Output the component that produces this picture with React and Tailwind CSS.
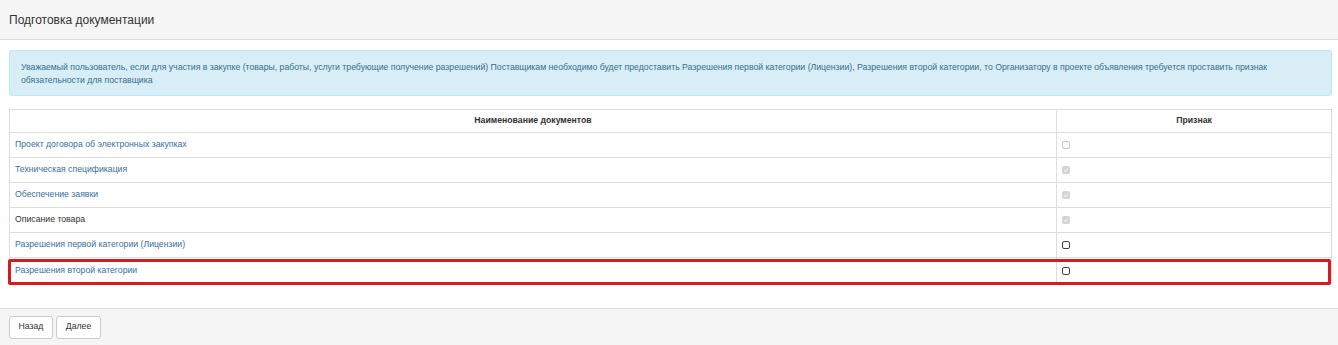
import React from "react";

const rows = [
  { name: "Проект договора об электронных закупках", link: true, state: "disabled" },
  { name: "Техническая спецификация", link: true, state: "disabledChecked" },
  { name: "Обеспечение заявки", link: true, state: "disabledChecked" },
  { name: "Описание товара", link: false, state: "disabledChecked" },
  { name: "Разрешения первой категории (Лицензии)", link: true, state: "empty" },
  { name: "Разрешения второй категории", link: true, state: "empty", marked: true },
];

function Box({ state }) {
  if (state === "disabled") {
    return <span className="block w-[8px] h-[8px] rounded-[2px] border border-[#c8c8c8] bg-[#fafafa]" />;
  }
  if (state === "disabledChecked") {
    return (
      <span className="flex items-center justify-center w-[8px] h-[8px] rounded-[2px] bg-[#d4d4d4]">
        <svg width="6" height="6" viewBox="0 0 6 6">
          <path d="M1 3.2 L2.4 4.5 L5 1.5" stroke="#f2f2f2" strokeWidth="1.1" fill="none" />
        </svg>
      </span>
    );
  }
  return <span className="block w-[8px] h-[8px] rounded-[2px] border border-[#444] bg-white" />;
}

export default function App() {
  return (
    <div className="w-[1338px] h-[345px] bg-white text-[#333] font-['Liberation_Sans',Arial,sans-serif] overflow-hidden">
      <div className="h-[40px] bg-[#f5f5f5] border-b border-[#ddd] flex items-center px-[9px]">
        <span className="text-[12px]">Подготовка документации</span>
      </div>
      <div className="px-[9px] pr-[6px] pt-[10px]">
        <div className="bg-[#d9edf7] border border-[#bce8f1] rounded-[3px] text-[#31708f] text-[8.7px] leading-[13px] pt-[10px] pb-[8px] px-[11px]">
          Уважаемый пользователь, если для участия в закупке (товары, работы, услуги требующие получение разрешений) Поставщикам необходимо будет предоставить Разрешения первой категории (Лицензии), Разрешения второй категории, то Организатору в проекте объявления требуется проставить признак обязательности для поставщика
        </div>
        <div className="mt-[13px] border border-[#ddd] relative">
          <div className="flex h-[23px] border-b border-[#ddd] text-[8.7px] font-bold">
            <div className="w-[1047px] border-r border-[#ddd] flex items-center justify-center">Наименование документов</div>
            <div className="flex-1 flex items-center justify-center">Признак</div>
          </div>
          {rows.map((r, i) => (
            <div key={i} className={"flex h-[25px] text-[8.7px] relative " + (i < rows.length - 1 ? "border-b border-[#ddd]" : "")}>
              <div className={"w-[1047px] border-r border-[#ddd] flex items-center pl-[5px] " + (r.link ? "text-[#3a6f9f]" : "text-[#333]")}>
                {r.name}
              </div>
              <div className="flex-1 flex items-center pl-[5px]">
                <Box state={r.state} />
              </div>
              {r.marked && (
                <div className="absolute left-[-2px] right-[0px] top-[1px] bottom-[-2px] border-[3px] border-[#d71920] rounded-[2px] pointer-events-none" />
              )}
            </div>
          ))}
        </div>
      </div>
      <div className="mt-[24px] h-[38px] bg-[#f5f5f5] border-t border-b border-[#ddd] flex items-center gap-[3px] px-[9px]">
        <button className="w-[44px] h-[23px] bg-white border border-[#ccc] rounded-[3px] text-[8.7px] text-[#333]">Назад</button>
        <button className="w-[45px] h-[23px] bg-white border border-[#ccc] rounded-[3px] text-[8.7px] text-[#333]">Далее</button>
      </div>
    </div>
  );
}
